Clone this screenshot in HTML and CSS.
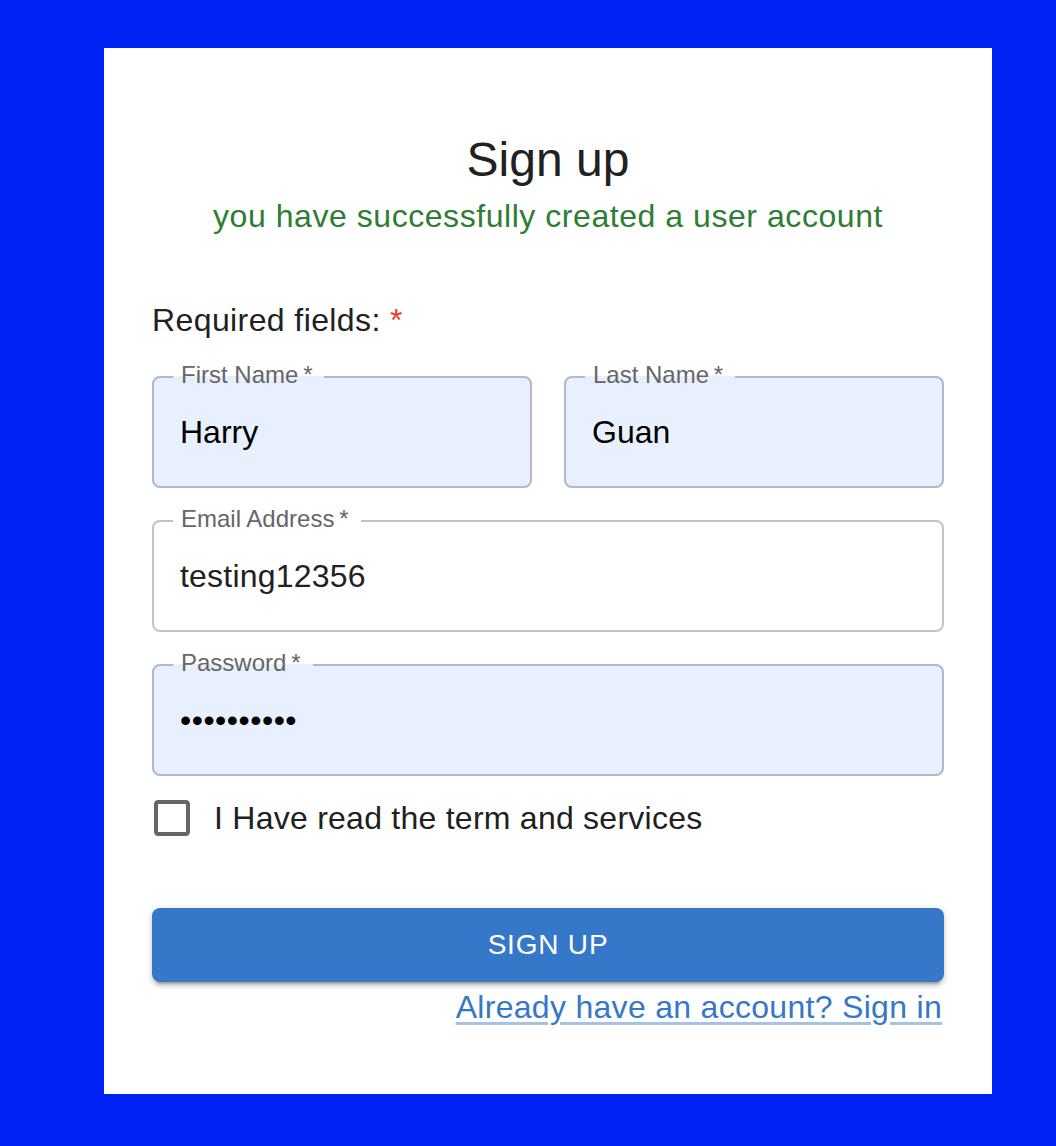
FILE: index.html
```html
<!DOCTYPE html>
<html lang="en">
<head>
<meta charset="utf-8">
<title>Sign up</title>
<link rel="stylesheet" href="styles.css">
</head>
<body>
  <main class="card">
    <h1 class="title">Sign up</h1>
    <p class="success">you have successfully created a user account</p>

    <p class="required">Required fields: <span class="star">*</span></p>

    <form class="form">
      <div class="grid">
        <fieldset class="field autofill">
          <legend>First Name&thinsp;*</legend>
          <div class="value">Harry</div>
        </fieldset>
        <fieldset class="field autofill">
          <legend>Last Name&thinsp;*</legend>
          <div class="value">Guan</div>
        </fieldset>
        <fieldset class="field wide">
          <legend>Email Address&thinsp;*</legend>
          <div class="value plain">testing12356</div>
        </fieldset>
        <fieldset class="field autofill wide">
          <legend>Password&thinsp;*</legend>
          <div class="value dots">••••••••••</div>
        </fieldset>
      </div>

      <label class="check">
        <svg class="check-icon" viewBox="0 0 24 24" width="48" height="48" aria-hidden="true">
          <path d="M19 5v14H5V5h14m0-2H5c-1.1 0-2 .9-2 2v14c0 1.1.9 2 2 2h14c1.1 0 2-.9 2-2V5c0-1.1-.9-2-2-2z"/>
        </svg>
        <span class="check-label">I Have read the term and services</span>
      </label>

      <button type="button" class="submit">Sign up</button>

      <div class="link-row">
        <a class="link" href="#">Already have an account? Sign in</a>
      </div>
    </form>
  </main>
</body>
</html>
```

FILE: styles.css
```css
* {
  box-sizing: border-box;
}

html, body {
  margin: 0;
  padding: 0;
}

body {
  background: #0022f5;
  font-family: "Liberation Sans", Arial, Helvetica, sans-serif;
  color: #212121;
  padding: 48px 0 52px 104px;
}

.card {
  width: 888px;
  background: #ffffff;
  padding: 80px 48px 63px;
  display: flex;
  flex-direction: column;
}

.title {
  margin: 0;
  font-size: 48px;
  line-height: 64px;
  font-weight: 400;
  text-align: center;
  color: #212121;
}

.success {
  margin: 0;
  font-size: 32px;
  line-height: 48px;
  text-align: center;
  color: #2e7d32;
  letter-spacing: 0.55px;
}

.required {
  margin: 56px 0 0;
  font-size: 32px;
  line-height: 48px;
  color: #212121;
  letter-spacing: 0.4px;
}

.star {
  color: #f2392b;
}

.form {
  display: flex;
  flex-direction: column;
}

.grid {
  margin-top: 19px;
  display: grid;
  grid-template-columns: 1fr 1fr;
  column-gap: 32px;
  row-gap: 19px;
}

.field {
  margin: 0;
  min-width: 0;
  border: 2px solid #c4c4c4;
  border-radius: 8px;
  padding: 18px 24px 31px 26px;
  background: #ffffff;
}

.field.autofill {
  background: #e8f0fe;
  border-color: #b3b9c4;
}

.field.wide {
  grid-column: 1 / span 2;
}

.field legend {
  margin-left: -7px;
  padding: 0 12px 4px 8px;
  font-size: 24px;
  line-height: 24px;
  color: #666666;
  white-space: nowrap;
}

.value {
  font-size: 32px;
  line-height: 46px;
  height: 46px;
  color: #000000;
}

.value.plain {
  color: #212121;
  letter-spacing: 0.2px;
}

.value.dots {
  letter-spacing: 0.5px;
}

.check {
  display: flex;
  align-items: center;
  padding: 18px 0;
}

.check-icon {
  display: block;
  margin-left: -4px;
  margin-right: 18px;
  fill: #666666;
  flex: none;
}

.check-label {
  font-size: 32px;
  line-height: 48px;
  color: #212121;
  letter-spacing: 0.25px;
}

.submit {
  margin-top: 48px;
  height: 74px;
  border: 0;
  border-radius: 8px;
  background: #3577c8;
  color: #ffffff;
  font-family: inherit;
  font-size: 28px;
  line-height: 48px;
  letter-spacing: 0.8px;
  text-transform: uppercase;
  font-weight: 400;
  box-shadow: 0 6px 2px -4px rgba(0, 0, 0, 0.2), 0 4px 4px 0 rgba(0, 0, 0, 0.14), 0 2px 10px 0 rgba(0, 0, 0, 0.12);
}

.link-row {
  margin-top: 1px;
  text-align: right;
  font-size: 32px;
  line-height: 48px;
  padding-right: 2px;
  letter-spacing: 0.3px;
}

.link {
  color: #3577c8;
  text-decoration: underline;
  text-decoration-color: rgba(53, 119, 200, 0.45);
  text-underline-offset: 4px;
}
```
